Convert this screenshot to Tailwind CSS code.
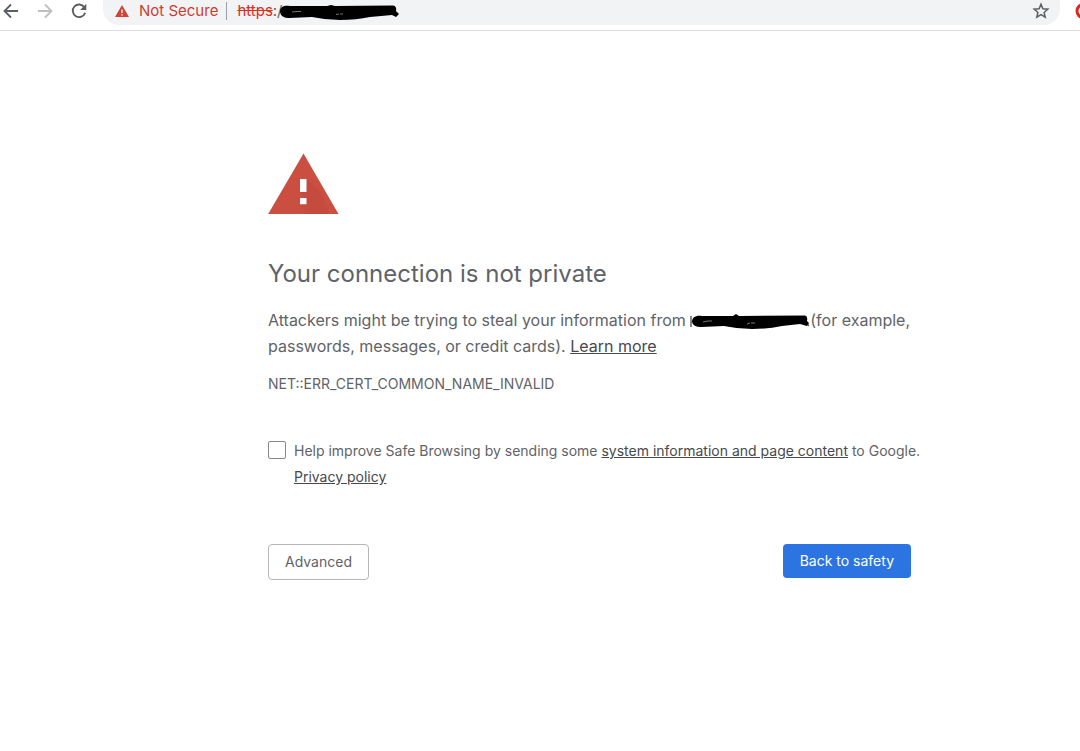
<!DOCTYPE html>
<html lang="en">
<head>
    <meta charset="UTF-8">
    <meta name="viewport" content="width=device-width, initial-scale=1.0">
    <title>Privacy error</title>
    <script src="https://cdn.jsdelivr.net/npm/@tailwindcss/browser@4"></script>
</head>
<body class="min-h-screen bg-white font-['Inter','Liberation_Sans',sans-serif] text-[#5f6368]">
    <!-- Toolbar -->
    <header class="flex h-[31px] items-start overflow-hidden border-b border-[#dadce0]">
        <nav class="flex h-6 w-[103px] shrink-0 items-start gap-3">
            <button type="button" aria-label="Back" class="h-[22px] w-[22px]">
                <svg width="22" height="22" viewBox="0 0 22 22" fill="none" stroke="#5b5f63" stroke-width="1.8"><path d="M18 11H4.500M11 4.500L4.500 11L11 17.500"/></svg>
            </button>
            <button type="button" aria-label="Forward" class="h-[22px] w-[22px]">
                <svg width="22" height="22" viewBox="0 0 22 22" fill="none" stroke="#bdbfc2" stroke-width="1.800"><path d="M4 11H17.500M11 4.500L17.500 11L11 17.500"/></svg>
            </button>
            <button type="button" aria-label="Reload" class="h-[22px] w-[22px]">
                <svg width="22" height="22" viewBox="0 0 22 22" fill="none"><path d="M16.300 7.200A6.300 6.300 0 1 0 17.100 12.700" stroke="#5b5f63" stroke-width="1.900"/><path d="M18.300 3.800V10H12.100Z" fill="#5b5f63"/></svg>
            </button>
        </nav>
        <div class="flex h-[25px] min-w-0 grow items-start rounded-b-2xl bg-[#f1f3f4] pr-2 pl-3">
            <div class="flex h-[22px] grow items-center text-[15px] leading-5">
                <svg class="mr-2.5 shrink-0" width="14" height="14" viewBox="0 0 14 14"><path d="M7 1L14 13H0Z" fill="#d04437"/><path d="M6.300 5.500H7.700V9H6.300ZM6.300 10.200H7.700V11.600H6.300Z" fill="#f1f3f4"/></svg>
                <span class="text-[#cf3c30]">Not Secure</span>
                <span class="mr-2.5 ml-2 h-[18px] w-px bg-[#9aa0a6]"></span>
                <span class="text-[#d93025] line-through">https</span><span>:/</span>
                <svg class="-ml-1 shrink-0" width="120" height="18" viewBox="0 0 120 18"><path d="M1 9.500C1 5 5 3 11 4L48 4L52 3L56 4L114 3.500Q118 4 117 9L120 12L117 15L113 13L91 15Q77 18 61 18Q47 18 33 15L10 16Q2 16 1 10Z" fill="#000"/><path d="M13 10L18 9.500H22M57 12.500L60 12M61 12H64" stroke="#777" fill="none"/></svg>
            </div>
            <button type="button" aria-label="Bookmark this page" class="h-[22px] w-[22px]">
                <svg width="22" height="22" viewBox="0 0 22 22" fill="none" stroke="#5b5f63" stroke-width="1.500"><path d="M11 4.200L12.900 8.800L17.800 9.200L14.100 12.400L15.200 17.200L11 14.700L6.800 17.200L7.900 12.400L4.200 9.200L9.100 8.800Z"/></svg>
            </button>
        </div>
        <div class="h-[22px] w-5 shrink-0 overflow-hidden pl-[15px]">
            <svg width="18" height="22" viewBox="0 0 18 22"><circle cx="8.500" cy="11" r="6.500" fill="none" stroke="#e0241b" stroke-width="3"/></svg>
        </div>
    </header>

    <!-- Interstitial -->
    <main class="pt-[122px] pl-[99px]">
        <div class="mx-auto max-w-[643px]">
            <svg width="72" height="62" viewBox="0 0 72 62">
                <path d="M35.500 0.500L70.500 61H0.200Z" fill="#cb4f40"/>
                <path d="M39 26L53 39.500L61 61H38L32 51L38 45L32 39Z" fill="#bd4739" opacity="0.450"/>
                <path d="M32 26H38.500V39H32ZM32 45H38.500V51.300H32Z" fill="#fff"/>
            </svg>

            <h1 class="mt-[41px] text-2xl leading-9">Your connection is not private</h1>

            <p class="mt-[15px] text-base leading-[26px]">
                Attackers might be trying to steal your information from
                <span class="whitespace-nowrap"><svg class="inline-block align-middle" width="120" height="18" viewBox="0 0 120 18"><path d="M1 3V14M113 6L119 13" stroke="#5f6368" stroke-width="1.500"/><path d="M2 9C2 4 6 2 12 3L43 3L46 1L49 3L115 2.500Q118 3 117 8L119 10L117 13L110 11L92 13Q78 16 62 16Q48 16 34 13L11 14Q3 14 2 9Z" fill="#000"/><path d="M13 9L18 8H22M57 11L60 10M61 10H65" stroke="#777" fill="none"/></svg>(for</span> example, passwords, messages, or credit cards).
                <a href="#" class="text-[#46494d] underline">Learn more</a>
            </p>

            <p class="mt-[15px] text-sm leading-5">NET::ERR_CERT_COMMON_NAME_INVALID</p>

            <div class="-mr-4 mt-11 flex items-start">
                <input id="reporting" type="checkbox" class="mt-[3px] mr-2 h-[18px] w-[18px] shrink-0 appearance-none rounded-xs border border-[#85888c] bg-white checked:bg-[#2b74e2]">
                <label for="reporting" class="text-sm leading-[26px]">
                    Help improve Safe Browsing by sending some
                    <a href="#" class="text-[#46494d] underline">system information and page content</a> to Google.
                    <a href="#" class="text-[#46494d] underline">Privacy policy</a>
                </label>
            </div>

            <div class="mt-[54px] flex items-start justify-between">
                <button type="button" class="h-9 rounded-sm border border-[#b4b7ba] px-4 text-sm">Advanced</button>
                <button type="button" class="h-[34px] rounded-sm bg-[#2b74e2] px-[17px] text-sm text-white">Back to safety</button>
            </div>
        </div>
    </main>
</body>
</html>
